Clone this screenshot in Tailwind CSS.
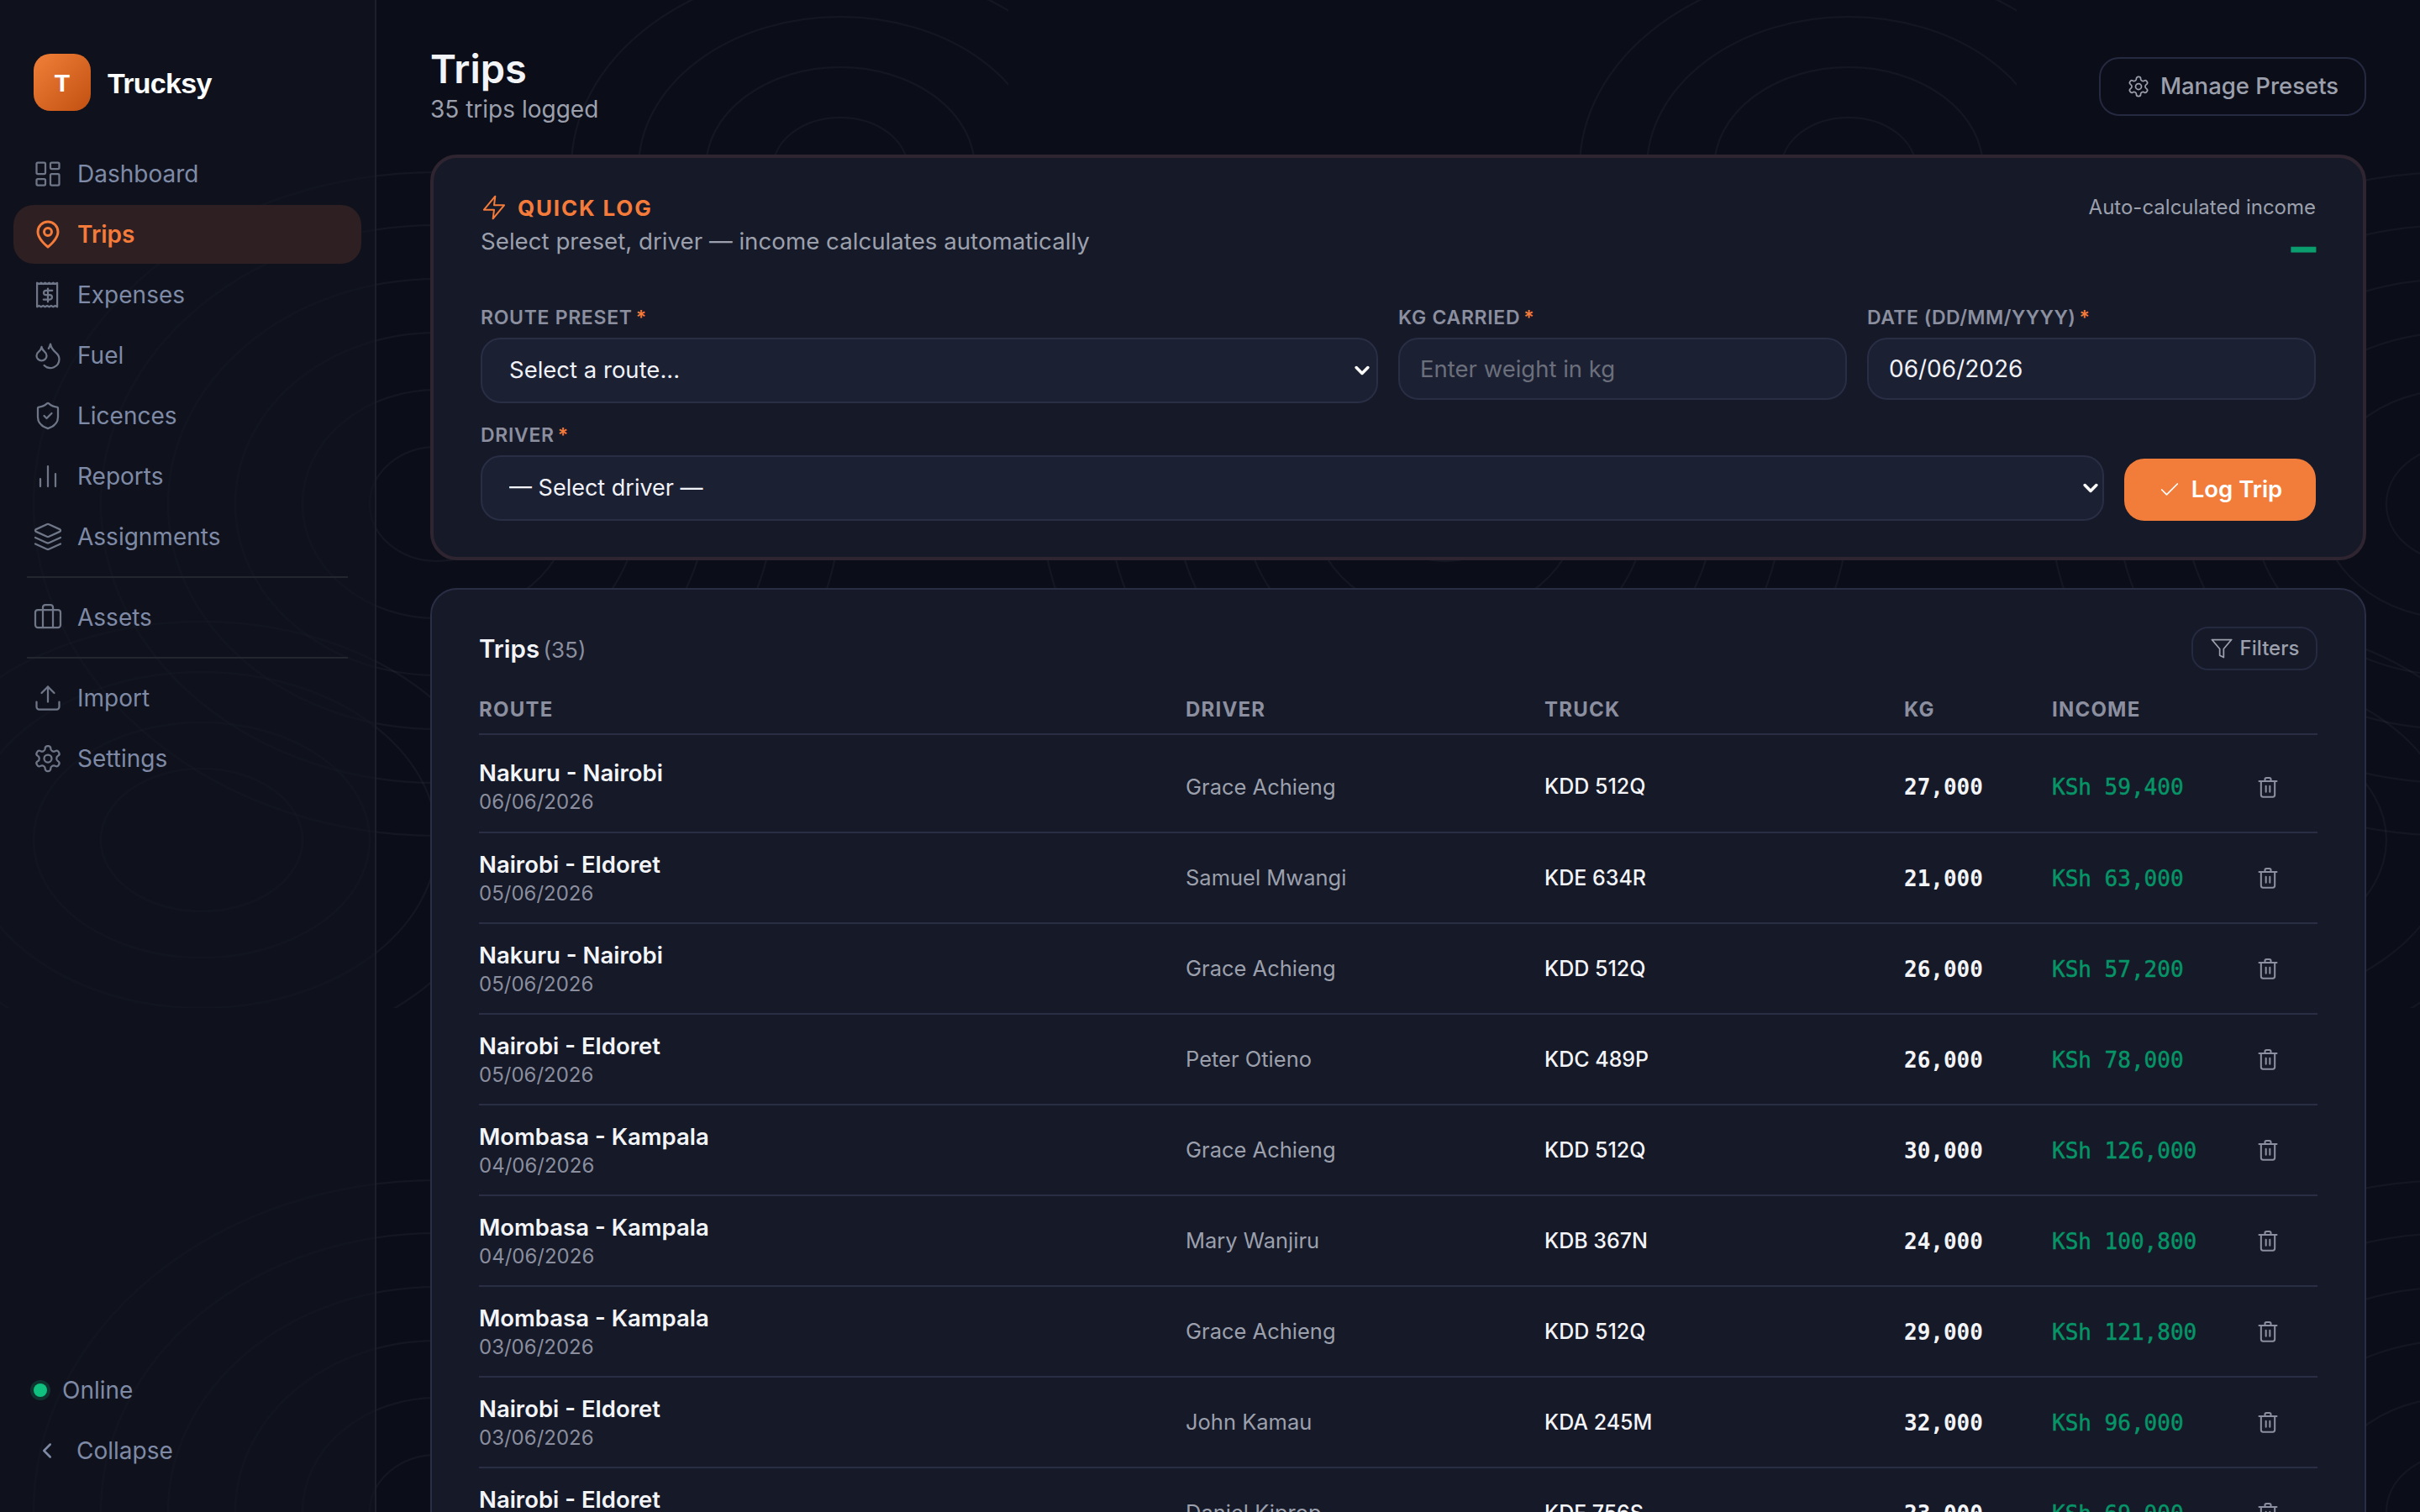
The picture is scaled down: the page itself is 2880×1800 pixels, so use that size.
<!DOCTYPE html>
<html lang="en">
<head>
    <meta charset="utf-8"/>
    <title>Trucksy - Trips</title>
    <script src="https://cdn.jsdelivr.net/npm/@tailwindcss/browser@4"></script>
</head>
<body class="bg-[#0b0d19] font-['Inter',sans-serif] text-white overflow-hidden">
    <!-- contour lines behind everything -->
    <svg class="absolute inset-0 w-full h-full" fill="none" stroke="#ffffff" stroke-opacity="0.035" stroke-width="2">
        <defs>
            <pattern id="topo" width="1200" height="1200" patternUnits="userSpaceOnUse">
                <ellipse cx="1000" cy="200" rx="80" ry="60"/>
                <ellipse cx="1000" cy="200" rx="160" ry="120"/>
                <ellipse cx="1000" cy="200" rx="240" ry="180"/>
                <ellipse cx="1000" cy="200" rx="320" ry="240"/>
                <ellipse cx="520" cy="600" rx="80" ry="68"/>
                <ellipse cx="520" cy="600" rx="160" ry="136"/>
                <ellipse cx="520" cy="600" rx="240" ry="204"/>
                <ellipse cx="520" cy="600" rx="320" ry="268"/>
                <ellipse cx="520" cy="600" rx="400" ry="332"/>
                <ellipse cx="520" cy="600" rx="480" ry="395"/>
                <ellipse cx="240" cy="1000" rx="120" ry="85"/>
                <ellipse cx="240" cy="1000" rx="200" ry="140"/>
                <ellipse cx="240" cy="1000" rx="280" ry="200"/>
                <ellipse cx="240" cy="1000" rx="360" ry="260"/>
            </pattern>
        </defs>
        <rect width="100%" height="100%" fill="url(#topo)" stroke="none"/>
    </svg>

    <div class="relative flex h-[1800px] overflow-hidden">
        <aside class="w-[448px] shrink-0 flex flex-col bg-[#11151f]/70 border-r-2 border-[#1d1f2a]">
            <div class="flex items-center gap-5 pl-10 pt-16">
                <div class="w-[68px] h-[68px] rounded-[20px] bg-gradient-to-br from-[#f08038] to-[#c2500f] flex items-center justify-center font-['Liberation_Sans'] font-bold text-[30px]">T</div>
                <div class="pt-[2px] font-['Liberation_Sans'] font-bold text-[34px] tracking-[-0.02em]">Trucksy</div>
            </div>
            <nav class="mt-10 px-4 flex flex-col text-[28px] text-[#7f8ba6]">
                <a class="h-[70px] mb-[2px] pl-[23px] flex items-center gap-[17px]">
                    <svg class="w-9 h-9 text-[#6f7688]" viewBox="0 0 24 24" fill="none" stroke="currentColor" stroke-width="1.5" stroke-linecap="round" stroke-linejoin="round"><rect x="3" y="3" width="7" height="9" rx="1"/><rect x="14" y="3" width="7" height="5" rx="1"/><rect x="14" y="12" width="7" height="9" rx="1"/><rect x="3" y="16" width="7" height="5" rx="1"/></svg>
                    Dashboard
                </a>
                <a class="h-[70px] mb-[2px] pl-[23px] flex items-center gap-[17px] rounded-3xl bg-[#2d1f22] text-[#f47b3a] font-semibold">
                    <svg class="w-9 h-9" viewBox="0 0 24 24" fill="none" stroke="currentColor" stroke-width="2" stroke-linecap="round" stroke-linejoin="round"><path d="M20 10c0 6-8 12-8 12s-8-6-8-12a8 8 0 0 1 16 0Z"/><circle cx="12" cy="10" r="3"/></svg>
                    Trips
                </a>
                <a class="h-[70px] mb-[2px] pl-[23px] flex items-center gap-[17px]">
                    <svg class="w-9 h-9 text-[#6f7688]" viewBox="0 0 24 24" fill="none" stroke="currentColor" stroke-width="1.5" stroke-linecap="round" stroke-linejoin="round"><path d="M4 2.500v19l1.600-.9 1.600.9 1.600-.9 1.600.9 1.600-.9 1.600.9 1.600-.9 1.600.9 1.600-.9 1.600.9v-19l-1.600.9-1.600-.9-1.600.9-1.600-.9-1.600.9-1.600-.9-1.600.9-1.600-.9-1.600.9Z" transform="translate(-.6 0)"/><path d="M15.500 8.500H10.500a1.800 1.800 0 0 0 0 3.600h3a1.800 1.800 0 0 1 0 3.600H8.500M12 7v10.500"/></svg>
                    Expenses
                </a>
                <a class="h-[70px] mb-[2px] pl-[23px] flex items-center gap-[17px]">
                    <svg class="w-9 h-9 text-[#6f7688]" viewBox="0 0 24 24" fill="none" stroke="currentColor" stroke-width="1.5" stroke-linecap="round" stroke-linejoin="round"><path d="M7 16.300c2.200 0 4-1.830 4-4.050 0-1.160-.570-2.260-1.710-3.190S7.290 6.750 7 5.300c-.290 1.450-1.140 2.840-2.290 3.760S3 11.100 3 12.250c0 2.220 1.800 4.050 4 4.050z"/><path d="M12.560 6.600A10.970 10.970 0 0 0 14 3.020c.500 2.500 2 4.900 4 6.500s3 3.500 3 5.500a6.980 6.980 0 0 1-11.910 4.970"/></svg>
                    Fuel
                </a>
                <a class="h-[70px] mb-[2px] pl-[23px] flex items-center gap-[17px]">
                    <svg class="w-9 h-9 text-[#6f7688]" viewBox="0 0 24 24" fill="none" stroke="currentColor" stroke-width="1.5" stroke-linecap="round" stroke-linejoin="round"><path d="M20 13c0 5-3.500 7.500-7.660 8.950a1 1 0 0 1-.670-.010C7.500 20.500 4 18 4 13V6a1 1 0 0 1 1-1c2 0 4.500-1.200 6.240-2.720a1.170 1.170 0 0 1 1.520 0C14.510 3.810 17 5 19 5a1 1 0 0 1 1 1z"/><path d="m9 12 2 2 4-4"/></svg>
                    Licences
                </a>
                <a class="h-[70px] mb-[2px] pl-[23px] flex items-center gap-[17px]">
                    <svg class="w-9 h-9 text-[#6f7688]" viewBox="0 0 24 24" fill="none" stroke="currentColor" stroke-width="1.5" stroke-linecap="round" stroke-linejoin="round"><path d="M18 20V10M12 20V4M6 20v-6"/></svg>
                    Reports
                </a>
                <a class="h-[70px] pl-[23px] flex items-center gap-[17px]">
                    <svg class="w-9 h-9 text-[#6f7688]" viewBox="0 0 24 24" fill="none" stroke="currentColor" stroke-width="1.5" stroke-linecap="round" stroke-linejoin="round"><path d="m12.830 2.180a2 2 0 0 0-1.660 0L2.600 6.080a1 1 0 0 0 0 1.830l8.580 3.910a2 2 0 0 0 1.660 0l8.580-3.900a1 1 0 0 0 0-1.830Z"/><path d="m22 17.650-9.170 4.160a2 2 0 0 1-1.660 0L2 17.650"/><path d="m22 12.650-9.170 4.160a2 2 0 0 1-1.660 0L2 12.650"/></svg>
                    Assignments
                </a>
            </nav>
            <div class="mx-8 mt-[12px] border-t-2 border-[#23252f]"></div>
            <div class="mt-3 px-4 text-[28px] text-[#7f8ba6]">
                <a class="h-[70px] pl-[23px] flex items-center gap-[17px]">
                    <svg class="w-9 h-9 text-[#6f7688]" viewBox="0 0 24 24" fill="none" stroke="currentColor" stroke-width="1.5" stroke-linecap="round" stroke-linejoin="round"><path d="M16 20V4a2 2 0 0 0-2-2h-4a2 2 0 0 0-2 2v16"/><rect x="2" y="6" width="20" height="14" rx="2"/></svg>
                    Assets
                </a>
            </div>
            <div class="mx-8 mt-[12px] border-t-2 border-[#23252f]"></div>
            <div class="mt-3 px-4 flex flex-col text-[28px] text-[#7f8ba6]">
                <a class="h-[70px] mb-[2px] pl-[23px] flex items-center gap-[17px]">
                    <svg class="w-9 h-9 text-[#6f7688]" viewBox="0 0 24 24" fill="none" stroke="currentColor" stroke-width="1.5" stroke-linecap="round" stroke-linejoin="round"><path d="M21 15v4a2 2 0 0 1-2 2H5a2 2 0 0 1-2-2v-4"/><path d="M17 8l-5-5-5 5"/><path d="M12 3v12"/></svg>
                    Import
                </a>
                <a class="h-[70px] pl-[23px] flex items-center gap-[17px]">
                    <svg class="w-9 h-9 text-[#6f7688]" viewBox="0 0 24 24" fill="none" stroke="currentColor" stroke-width="1.5" stroke-linecap="round" stroke-linejoin="round"><path d="M12.220 2h-.440a2 2 0 0 0-2 2v.180a2 2 0 0 1-1 1.730l-.430.250a2 2 0 0 1-2 0l-.150-.080a2 2 0 0 0-2.730.730l-.220.380a2 2 0 0 0 .730 2.730l.150.100a2 2 0 0 1 1 1.720v.510a2 2 0 0 1-1 1.740l-.150.090a2 2 0 0 0-.730 2.730l.220.380a2 2 0 0 0 2.730.730l.150-.080a2 2 0 0 1 2 0l.430.250a2 2 0 0 1 1 1.730V20a2 2 0 0 0 2 2h.440a2 2 0 0 0 2-2v-.180a2 2 0 0 1 1-1.730l.430-.250a2 2 0 0 1 2 0l.150.080a2 2 0 0 0 2.730-.730l.220-.390a2 2 0 0 0-.730-2.730l-.150-.080a2 2 0 0 1-1-1.740v-.500a2 2 0 0 1 1-1.740l.150-.090a2 2 0 0 0 .730-2.730l-.220-.380a2 2 0 0 0-2.730-.730l-.150.080a2 2 0 0 1-2 0l-.430-.250a2 2 0 0 1-1-1.730V4a2 2 0 0 0-2-2z"/><circle cx="12" cy="12" r="3"/></svg>
                    Settings
                </a>
            </div>
            <div class="mt-auto pb-[36px] text-[28px] text-[#7f8ba6]">
                <div class="h-[70px] pl-10 flex items-center gap-[18px]">
                    <span class="w-4 h-4 rounded-full bg-[#10c07f] ring-4 ring-[#10c07f]/20"></span>
                    Online
                </div>
                <div class="h-[74px] pl-[41px] flex items-center gap-[20px]">
                    <svg class="w-[30px] h-[30px]" viewBox="0 0 24 24" fill="none" stroke="currentColor" stroke-width="2" stroke-linecap="round" stroke-linejoin="round"><path d="m15 18-6-6 6-6"/></svg>
                    Collapse
                </div>
            </div>
        </aside>

        <main class="flex-1 min-w-0 px-16 pt-[52px]">
            <div class="flex items-start justify-between h-[132px]">
                <div>
                    <h1 class="text-[47px] leading-[60px] font-semibold text-[#f3f4f8]">Trips</h1>
                    <p class="text-[28px] leading-[36px] text-[#9ca0ad]">35 trips logged</p>
                </div>
                <button class="mt-4 h-[70px] w-[318px] rounded-3xl border-2 border-[#262a40] flex items-center justify-center gap-3 text-[27.5px] font-medium text-[#9ca0ad]">
                    <svg class="w-7 h-7" viewBox="0 0 24 24" fill="none" stroke="currentColor" stroke-width="1.5" stroke-linecap="round" stroke-linejoin="round"><path d="M12.220 2h-.440a2 2 0 0 0-2 2v.180a2 2 0 0 1-1 1.730l-.430.250a2 2 0 0 1-2 0l-.150-.080a2 2 0 0 0-2.730.730l-.220.380a2 2 0 0 0 .730 2.730l.150.100a2 2 0 0 1 1 1.720v.510a2 2 0 0 1-1 1.740l-.150.090a2 2 0 0 0-.730 2.730l.220.380a2 2 0 0 0 2.730.730l.150-.080a2 2 0 0 1 2 0l.430.250a2 2 0 0 1 1 1.730V20a2 2 0 0 0 2 2h.440a2 2 0 0 0 2-2v-.180a2 2 0 0 1 1-1.730l.430-.250a2 2 0 0 1 2 0l.150.080a2 2 0 0 0 2.730-.730l.220-.390a2 2 0 0 0-.730-2.730l-.150-.080a2 2 0 0 1-1-1.740v-.500a2 2 0 0 1 1-1.740l.150-.090a2 2 0 0 0 .730-2.730l-.220-.380a2 2 0 0 0-2.730-.730l-.150.080a2 2 0 0 1-2 0l-.430-.250a2 2 0 0 1-1-1.730V4a2 2 0 0 0-2-2z"/><circle cx="12" cy="12" r="3"/></svg>
                    Manage Presets
                </button>
            </div>

            <section class="h-[483px] rounded-[32px] border-4 border-[#2f2530] bg-[#151928] px-14 pt-[43px]">
                <div class="flex items-start justify-between h-[83px]">
                    <div>
                        <div class="flex items-center gap-3 h-[32px] text-[26px] font-bold tracking-[0.07em] text-[#f47b3a]">
                            <svg class="w-8 h-8" viewBox="0 0 24 24" fill="none" stroke="currentColor" stroke-width="1.500" stroke-linecap="round" stroke-linejoin="round"><path d="M13 2 3 14h9l-1 8 10-12h-9l1-8z"/></svg>
                            QUICK LOG
                        </div>
                        <p class="mt-1 text-[27.7px] leading-[40px] text-[#9ca0ad]">Select preset, driver — income calculates automatically</p>
                    </div>
                    <div class="text-right">
                        <p class="text-[24px] leading-[32px] text-[#9ca0ad]">Auto-calculated income</p>
                        <p class="mt-[6px] font-['DejaVu_Sans_Mono'] font-bold text-[48px] leading-[48px] text-[#0a9d6e] [-webkit-text-stroke:1px_#0a9d6e]">—</p>
                    </div>
                </div>
                <div class="mt-[50px] grid grid-cols-[2fr_1fr_1fr] gap-x-6 items-start">
                    <div>
                        <label class="block h-[38px] leading-[28px] text-[23px] font-semibold tracking-[0.03em] text-[#8b8f9f]">ROUTE PRESET<span class="ml-1 text-[#f47b3a]">*</span></label>
                        <div class="relative">
                            <select class="w-full h-[78px] appearance-none rounded-3xl border-2 border-[#2a2e45] bg-[#1c2033] pl-8 text-[27.5px] text-[#f0f2f8]"><option>Select a route...</option></select>
                            <svg class="absolute right-2 top-[28px] w-[22px] h-[22px] text-white" viewBox="0 0 16 16" fill="none" stroke="currentColor" stroke-width="2.600" stroke-linecap="round" stroke-linejoin="round"><path d="M3 5.500l5 5 5-5"/></svg>
                        </div>
                    </div>
                    <div>
                        <label class="block h-[38px] leading-[28px] text-[23px] font-semibold tracking-[0.03em] text-[#8b8f9f]">KG CARRIED<span class="ml-1 text-[#f47b3a]">*</span></label>
                        <input class="w-full h-[74px] rounded-3xl border-2 border-[#2a2e45] bg-[#1c2033] px-6 text-[27.5px] placeholder:text-[#6b6f7c]" placeholder="Enter weight in kg"/>
                    </div>
                    <div>
                        <label class="block h-[38px] leading-[28px] text-[23px] font-semibold tracking-[0.02em] text-[#8b8f9f]">DATE (DD/MM/YYYY)<span class="ml-1 text-[#f47b3a]">*</span></label>
                        <input class="w-full h-[74px] rounded-3xl border-2 border-[#2a2e45] bg-[#1c2033] px-6 text-[28px] text-[#f0f2f8]" value="06/06/2026"/>
                    </div>
                </div>
                <div class="mt-6">
                    <label class="block h-[38px] leading-[28px] text-[23px] font-semibold tracking-[0.03em] text-[#8b8f9f]">DRIVER<span class="ml-1 text-[#f47b3a]">*</span></label>
                    <div class="flex items-end gap-6">
                        <div class="relative flex-1">
                            <select class="w-full h-[78px] appearance-none rounded-3xl border-2 border-[#2a2e45] bg-[#1c2033] pl-8 text-[27px] text-[#f0f2f8]"><option>— Select driver —</option></select>
                            <svg class="absolute right-[5px] top-[28px] w-[22px] h-[22px] text-white" viewBox="0 0 16 16" fill="none" stroke="currentColor" stroke-width="2.600" stroke-linecap="round" stroke-linejoin="round"><path d="M3 5.500l5 5 5-5"/></svg>
                        </div>
                        <button class="h-[74px] w-[228px] rounded-3xl bg-[#f27d3a] flex items-center justify-center gap-3 text-[27.5px] font-semibold text-white">
                            <svg class="w-7 h-7" viewBox="0 0 24 24" fill="none" stroke="currentColor" stroke-width="1.500" stroke-linecap="round" stroke-linejoin="round"><path d="M20 6 9 17l-5-5"/></svg>
                            Log Trip
                        </button>
                    </div>
                </div>
            </section>

            <section class="mt-[33px] h-[1200px] rounded-[32px] border-2 border-[#2a2e45] bg-[#151928] px-14 pt-11">
                <div class="flex items-center justify-between h-[52px]">
                    <h2 class="text-[29.5px] font-semibold text-[#f3f4f8]">Trips <span class="-ml-[3px] text-[26px] font-normal text-[#8b8f9f]">(35)</span></h2>
                    <button class="h-[52px] w-[150px] rounded-[20px] border-2 border-[#262a40] flex items-center justify-center gap-2 text-[24px] font-medium text-[#9ca0ad]">
                        <svg class="w-7 h-7" viewBox="0 0 24 24" fill="none" stroke="currentColor" stroke-width="1.5" stroke-linecap="round" stroke-linejoin="round"><path d="M22 3H2l8 9.460V19l4 2v-8.540L22 3z"/></svg>
                        Filters
                    </button>
                </div>
                <table class="mt-[19px] w-full table-fixed border-collapse">
                    <colgroup>
                        <col class="w-[841px]"/><col class="w-[427px]"/><col class="w-[428px]"/><col class="w-[176px]"/><col class="w-[198px]"/><col/>
                    </colgroup>
                    <thead>
                        <tr class="h-[57px] border-b-2 border-[#2a2e45] text-left text-[24px] tracking-[0.05em] text-[#8b8f9f]">
                            <th class="font-bold">ROUTE</th>
                            <th class="font-bold">DRIVER</th>
                            <th class="font-bold">TRUCK</th>
                            <th class="font-bold">KG</th>
                            <th class="font-bold">INCOME</th>
                            <th></th>
                        </tr>
                        <tr class="h-[9px]"></tr>
                    </thead>
                    <tbody id="rows"></tbody>
                </table>
            </section>
        </main>
    </div>

    <script>
        const trips = [
            ['Nakuru - Nairobi', '06/06/2026', 'Grace Achieng', 'KDD 512Q', '27,000', 'KSh 59,400'],
            ['Nairobi - Eldoret', '05/06/2026', 'Samuel Mwangi', 'KDE 634R', '21,000', 'KSh 63,000'],
            ['Nakuru - Nairobi', '05/06/2026', 'Grace Achieng', 'KDD 512Q', '26,000', 'KSh 57,200'],
            ['Nairobi - Eldoret', '05/06/2026', 'Peter Otieno', 'KDC 489P', '26,000', 'KSh 78,000'],
            ['Mombasa - Kampala', '04/06/2026', 'Grace Achieng', 'KDD 512Q', '30,000', 'KSh 126,000'],
            ['Mombasa - Kampala', '04/06/2026', 'Mary Wanjiru', 'KDB 367N', '24,000', 'KSh 100,800'],
            ['Mombasa - Kampala', '03/06/2026', 'Grace Achieng', 'KDD 512Q', '29,000', 'KSh 121,800'],
            ['Nairobi - Eldoret', '03/06/2026', 'John Kamau', 'KDA 245M', '32,000', 'KSh 96,000'],
            ['Nairobi - Eldoret', '02/06/2026', 'Daniel Kiprop', 'KDF 756S', '23,000', 'KSh 69,000']
        ];
        document.getElementById('rows').innerHTML = trips.map(t => `
            <tr class="h-[108px] border-b-2 border-[#2a2e45]">
                <td>
                    <div class="-mt-px text-[27.5px] leading-[38px] font-semibold text-[#f3f4f8]">${t[0]}</div>
                    <div class="text-[24px] leading-[32px] text-[#8a8e9e]">${t[1]}</div>
                </td>
                <td class="pt-px text-[25.5px] text-[#9ca0ad]">${t[2]}</td>
                <td class="pt-px text-[25px] font-medium text-[#f3f4f8]">${t[3]}</td>
                <td class="pt-[2px] font-['DejaVu_Sans_Mono'] text-[26px] font-bold text-[#f3f4f8]">${t[4]}</td>
                <td class="pt-[2px] font-['DejaVu_Sans_Mono'] text-[26px] text-[#079467] [-webkit-text-stroke:0.5px_#079467]">${t[5]}</td>
                <td>
                    <svg class="mx-auto w-7 h-7 text-[#8b8f9f]" viewBox="0 0 24 24" fill="none" stroke="currentColor" stroke-width="1.75" stroke-linecap="round" stroke-linejoin="round"><path d="M3 6h18M19 6v14a2 2 0 0 1-2 2H7a2 2 0 0 1-2-2V6M9 6V4a1.500 1.500 0 0 1 1.500-1.500h3A1.500 1.500 0 0 1 15 4v2M10 11v6M14 11v6"/></svg>
                </td>
            </tr>`).join('');
    </script>
</body>
</html>
